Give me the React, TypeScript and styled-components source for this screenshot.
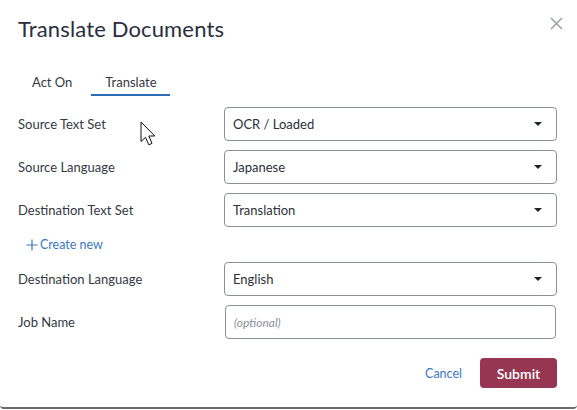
import React from "react";
import styled, { createGlobalStyle } from "styled-components";

const Global = createGlobalStyle`
  html, body { margin: 0; padding: 0; background: #ffffff; }
  body { font-family: Lato, "Open Sans", sans-serif; color: #2b2f3a; }
  * { box-sizing: border-box; }
`;

const Dialog = styled.div`
  position: relative;
  width: 577px;
  height: 409px;
  background: #fff;
  border-bottom: 2px solid #6b6b6b;
  border-radius: 0 0 4px 4px;
  padding: 15px 20px 0 18px;
  display: flex;
  flex-direction: column;
`;

const Header = styled.div`
  display: flex;
  justify-content: space-between;
  align-items: flex-start;
  height: 59px;
`;

const Title = styled.h1`
  margin: 0;
  font-size: 22px;
  font-weight: 400;
  color: #2a2e3d;
  letter-spacing: 0.15px;
`;

const Close = styled.button`
  border: 0;
  background: none;
  padding: 0;
  margin: 2px -7px 0 0;
  width: 14px;
  height: 14px;
  cursor: pointer;
  display: flex;
`;

const Tabs = styled.div`
  display: flex;
  margin-left: 2px;
  height: 27px;
  align-items: flex-start;
  margin-bottom: 6px;
`;

const Tab = styled.div<{ $active?: boolean }>`
  font-size: 13px;
  color: #343846;
  padding: 0 13px 3px ${(p) => (p.$active ? "14px" : "12px")};
  border-bottom: 2px solid ${(p) => (p.$active ? "#2a6db5" : "transparent")};
  margin-right: ${(p) => (p.$active ? "0" : "6px")};
  line-height: 17px;
`;

const Form = styled.div`
  display: grid;
  grid-template-columns: 206px 333px;
  row-gap: 9px;
  align-items: center;
`;

const Label = styled.div`
  font-size: 13px;
  color: #343846;
`;

const Select = styled.div`
  height: 34px;
  border: 1px solid #8c909b;
  border-radius: 4px;
  display: flex;
  align-items: center;
  justify-content: space-between;
  padding: 0 14px 0 8px;
  font-size: 13px;
  color: #2b2f3a;
`;

const Input = styled.div`
  height: 34px;
  margin-left: 1px;
  margin-right: 1px;
  border: 1px solid #8c909b;
  border-radius: 4px;
  display: flex;
  align-items: center;
  padding: 0 8px;
  font-size: 12px;
  font-style: italic;
  color: #8b8f99;
`;

const Caret = styled.span`
  width: 0;
  height: 0;
  border-left: 4px solid transparent;
  border-right: 4px solid transparent;
  border-top: 4px solid #1f2330;
`;

const CreateNew = styled.a`
  grid-column: 1 / 3;
  display: flex;
  align-items: center;
  gap: 2px;
  height: 17px;
  margin: 0 0 0 8px;
  font-size: 12.5px;
  color: #3a78c2;
  text-decoration: none;
`;

const Footer = styled.div`
  display: flex;
  justify-content: flex-end;
  align-items: center;
  gap: 18px;
  margin-top: 19px;
`;

const Cancel = styled.a`
  font-size: 12.5px;
  color: #3a78c2;
`;

const Submit = styled.button`
  width: 77px;
  height: 30px;
  border: 0;
  border-radius: 4px;
  background: #963653;
  color: #fff;
  font-family: inherit;
  font-size: 14px;
  font-weight: 600;
`;

const Cursor = styled.svg`
  position: absolute;
  left: 140px;
  top: 121px;
`;

const SelectField = ({ value }: { value: string }) => (
  <Select>
    <span>{value}</span>
    <Caret />
  </Select>
);

export default function App() {
  return (
    <>
      <Global />
      <Dialog>
        <Header>
          <Title>Translate Documents</Title>
          <Close aria-label="close">
            <svg width="13" height="13" viewBox="0 0 13 13">
              <path d="M1 1L12 12M12 1L1 12" stroke="#9a9ea8" strokeWidth="1.5" />
            </svg>
          </Close>
        </Header>
        <Tabs>
          <Tab>Act On</Tab>
          <Tab $active>Translate</Tab>
        </Tabs>
        <Form>
          <Label>Source Text Set</Label>
          <SelectField value="OCR / Loaded" />
          <Label>Source Language</Label>
          <SelectField value="Japanese" />
          <Label>Destination Text Set</Label>
          <SelectField value="Translation" />
          <CreateNew href="#">
            <svg width="12" height="12" viewBox="0 0 12 12">
              <path d="M6 0.5V11.5M0.5 6H11.5" stroke="#3a78c2" strokeWidth="1.2" />
            </svg>
            Create new
          </CreateNew>
          <Label>Destination Language</Label>
          <SelectField value="English" />
          <Label>Job Name</Label>
          <Input>(optional)</Input>
        </Form>
        <Footer>
          <Cancel>Cancel</Cancel>
          <Submit>Submit</Submit>
        </Footer>
        <Cursor width="20" height="28" viewBox="0 0 20 28">
          <path
            d="M1 1V20.5L5.5 16.3L8.8 23.8L12 22.4L8.8 15H14.8Z"
            fill="#fff"
            stroke="#111"
            strokeWidth="1"
            strokeLinejoin="round"
          />
        </Cursor>
      </Dialog>
    </>
  );
}
